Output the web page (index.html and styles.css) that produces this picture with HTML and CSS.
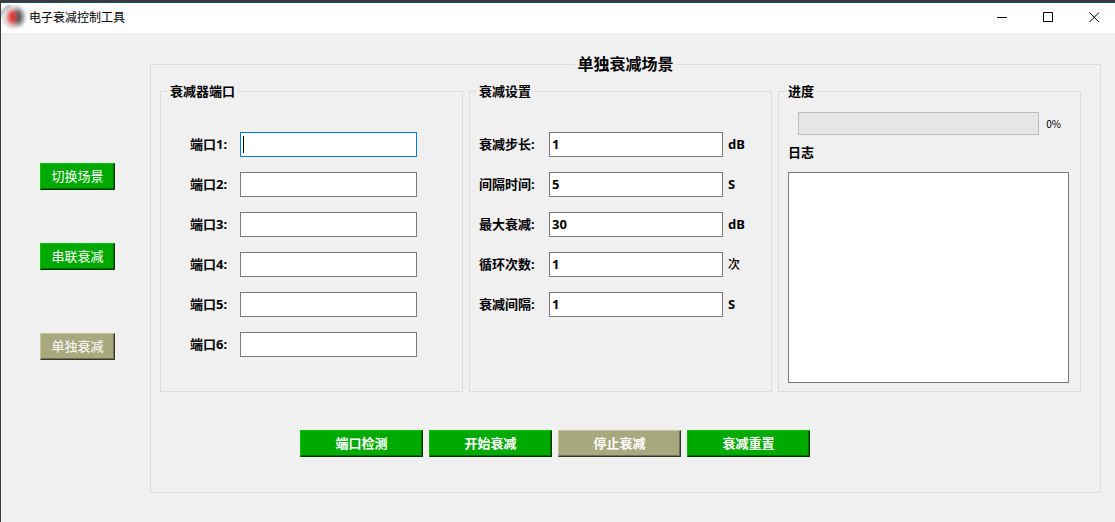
FILE: index.html
```html
<!DOCTYPE html>
<html lang="zh-CN">
<head>
<meta charset="utf-8">
<title>电子衰减控制工具</title>
<link rel="stylesheet" href="styles.css">
</head>
<body>
<div class="window">
  <header class="titlebar">
    <svg class="app-icon" viewBox="0 0 28 28" aria-hidden="true">
      <defs>
        <filter id="soft" x="-50%" y="-50%" width="200%" height="200%"><feGaussianBlur stdDeviation="2.6"/></filter>
        <filter id="edge" x="-50%" y="-50%" width="200%" height="200%"><feGaussianBlur stdDeviation="1.2"/></filter>
      </defs>
      <circle cx="12" cy="13" r="12" fill="#e8e8e8" filter="url(#edge)"/>
      <path d="M0 12A11 11 0 0 1 10 2" fill="none" stroke="#a9b0b4" stroke-width="2" filter="url(#edge)"/>
      <ellipse cx="17" cy="13" rx="5" ry="8" fill="#4c5454" filter="url(#soft)"/>
      <ellipse cx="11" cy="13" rx="4" ry="7" fill="#f02020" filter="url(#soft)"/>
    </svg>
    <h1 class="title">电子衰减控制工具</h1>
    <div class="window-controls">
      <button class="window-button" type="button" aria-label="最小化"><svg class="glyph" viewBox="0 0 11 11"><path d="M0 5.5H10"/></svg></button>
      <button class="window-button" type="button" aria-label="最大化"><svg class="glyph" viewBox="0 0 11 11"><path d="M.5.5H9.5V9.5H.5Z"/></svg></button>
      <button class="window-button" type="button" aria-label="关闭"><svg class="glyph" viewBox="0 0 11 11"><path d="M.5.5L10 10M10 .5L.5 10"/></svg></button>
    </div>
  </header>
  <div class="body">
    <nav class="sidebar">
      <button class="button" type="button">切换场景</button>
      <button class="button" type="button">串联衰减</button>
      <button class="button button-last" type="button" disabled>单独衰减</button>
    </nav>
    <main class="main">
      <fieldset class="scene">
        <legend class="scene-title">单独衰减场景</legend>
        <div class="groups">
          <fieldset class="group">
            <legend class="group-title">衰减器端口</legend>
            <div class="rows ports">
              <div class="row"><label class="caption" for="p1">端口1:</label><input class="entry entry-active" id="p1" type="text"></div>
              <div class="row"><label class="caption" for="p2">端口2:</label><input class="entry" id="p2" type="text"></div>
              <div class="row"><label class="caption" for="p3">端口3:</label><input class="entry" id="p3" type="text"></div>
              <div class="row"><label class="caption" for="p4">端口4:</label><input class="entry" id="p4" type="text"></div>
              <div class="row"><label class="caption" for="p5">端口5:</label><input class="entry" id="p5" type="text"></div>
              <div class="row"><label class="caption" for="p6">端口6:</label><input class="entry" id="p6" type="text"></div>
            </div>
          </fieldset>
          <fieldset class="group">
            <legend class="group-title">衰减设置</legend>
            <div class="rows settings">
              <div class="row"><label class="caption" for="s1">衰减步长:</label><input class="entry" id="s1" type="text" value="1"><span class="caption unit">dB</span></div>
              <div class="row"><label class="caption" for="s2">间隔时间:</label><input class="entry" id="s2" type="text" value="5"><span class="caption unit">S</span></div>
              <div class="row"><label class="caption" for="s3">最大衰减:</label><input class="entry" id="s3" type="text" value="30"><span class="caption unit">dB</span></div>
              <div class="row"><label class="caption" for="s4">循环次数:</label><input class="entry" id="s4" type="text" value="1"><span class="unit unit-text">次</span></div>
              <div class="row"><label class="caption" for="s5">衰减间隔:</label><input class="entry" id="s5" type="text" value="1"><span class="caption unit">S</span></div>
            </div>
          </fieldset>
          <fieldset class="group">
            <legend class="group-title">进度</legend>
            <div class="status">
              <div class="progress-row">
                <progress class="progress" id="progress" max="100" value="0" aria-label="进度"></progress>
                <label class="percent" for="progress">0%</label>
              </div>
              <label class="log-label" for="log">日志</label>
              <textarea class="log" id="log"></textarea>
            </div>
          </fieldset>
        </div>
        <div class="actions">
          <button class="button button-wide" type="button">端口检测</button>
          <button class="button button-wide" type="button">开始衰减</button>
          <button class="button button-wide" type="button" disabled>停止衰减</button>
          <button class="button button-wide" type="button">衰减重置</button>
        </div>
      </fieldset>
    </main>
  </div>
</div>
</body>
</html>
```
FILE: styles.css
```css
* {
  box-sizing: border-box;
}

body {
  margin: 0;
  background: #f0f0f0;
  color: #000;
  font: bold 13px/20px "Noto Sans", "Noto Sans CJK SC", sans-serif;
}

.window {
  min-height: 100vh;
  border-top: 2px solid #3a3a3a;
  border-left: 1px solid #3a3a3a;
}

.titlebar {
  display: flex;
  align-items: center;
  height: 31px;
  border-top: 1px solid #1d4b73;
  background: #fff;
}

.app-icon {
  width: 28px;
  height: 28px;
}

.title {
  flex: 1;
  margin: 0;
  padding-bottom: 2px;
  font: 12px/20px "Noto Sans CJK SC", sans-serif;
}

.window-controls {
  display: flex;
}

.window-button {
  display: grid;
  place-items: center;
  width: 46px;
  height: 30px;
  padding: 0 0 2px 4px;
  border: 0;
  background: none;
}

.glyph {
  width: 11px;
  height: 11px;
  fill: none;
  stroke: #000;
  stroke-width: 1;
}

.body {
  display: flex;
}

.sidebar {
  display: flex;
  flex-direction: column;
  gap: 53px;
  padding: 130px 35px 0 39px;
}

.button {
  width: 75px;
  height: 27px;
  padding: 0 0 2px;
  border: 1px solid;
  border-color: #00c400 #003800 #003800 #00c400;
  border-radius: 0;
  background: #00a900;
  box-shadow: inset -1px -1px 0 #007000;
  color: #fff;
  font: 13px/20px "Noto Sans CJK SC", sans-serif;
}

.button:disabled {
  border-color: #c4c494 #38382a #38382a #c4c494;
  background: #a9a97f;
  box-shadow: inset -1px -1px 0 #707055;
}

.button-last {
  margin-top: 10px;
}

.main {
  flex: 1;
  min-width: 0;
  padding: 21px 14px 0 0;
}

.scene,
.group {
  min-width: 0;
  margin: 0;
  border: 1px solid #dcdcdc;
}

.scene {
  padding: 8px 9px 35px;
}

.scene-title {
  margin: 0 auto;
  padding: 0 2px;
  font-size: 16px;
  line-height: 20px;
}

.groups {
  display: grid;
  grid-template-columns: repeat(3, 1fr);
  gap: 6px;
  padding-right: 10px;
}

.group {
  padding: 0 9px 8px 6px;
}

.group-title {
  padding: 0 3px;
  line-height: 18px;
}

.rows {
  display: grid;
  gap: 15px;
}

.ports {
  padding: 32px 36px 0 23px;
}

.settings {
  padding: 32px 0 0 3px;
}

.row {
  display: grid;
  align-items: center;
}

.ports .row {
  grid-template-columns: 50px 1fr;
}

.settings .row {
  grid-template-columns: 70px 1fr 39px;
}

.caption {
  padding-bottom: 2px;
}

.unit {
  padding-left: 5px;
}

.unit-text {
  font-size: 12px;
  font-weight: 500;
}

.entry {
  width: 100%;
  height: 25px;
  padding: 0 2px 2px;
  border: 1px solid #7a7a7a;
  border-radius: 0;
  background: #fff;
  color: #000;
  font: inherit;
}

.entry-active {
  border-color: #0078d7;
  background: linear-gradient(#000, #000) 2px center / 1px 17px no-repeat #fff;
}

.status {
  display: flex;
  flex-direction: column;
  padding: 12px 2px 0 3px;
}

.progress-row {
  display: flex;
  align-items: center;
  gap: 7px;
  padding: 0 8px 0 10px;
}

.progress {
  flex: 1;
  min-width: 0;
  height: 23px;
  border: 1px solid #bcbcbc;
  background: #e6e6e6;
  appearance: none;
}

.progress::-webkit-progress-bar {
  background: #e6e6e6;
}

.progress::-webkit-progress-value {
  background: #06b025;
}

.percent {
  font: 10px/20px "Noto Sans CJK SC", sans-serif;
}

.log-label {
  margin: 7px 0 10px;
}

.log {
  width: 100%;
  height: 211px;
  border: 1px solid #7a7a7a;
  border-radius: 0;
  background: #fff;
  font: inherit;
  resize: none;
}

.actions {
  display: flex;
  gap: 6px;
  padding: 38px 0 0 140px;
}

.button-wide {
  width: 123px;
  font-weight: bold;
}
```
